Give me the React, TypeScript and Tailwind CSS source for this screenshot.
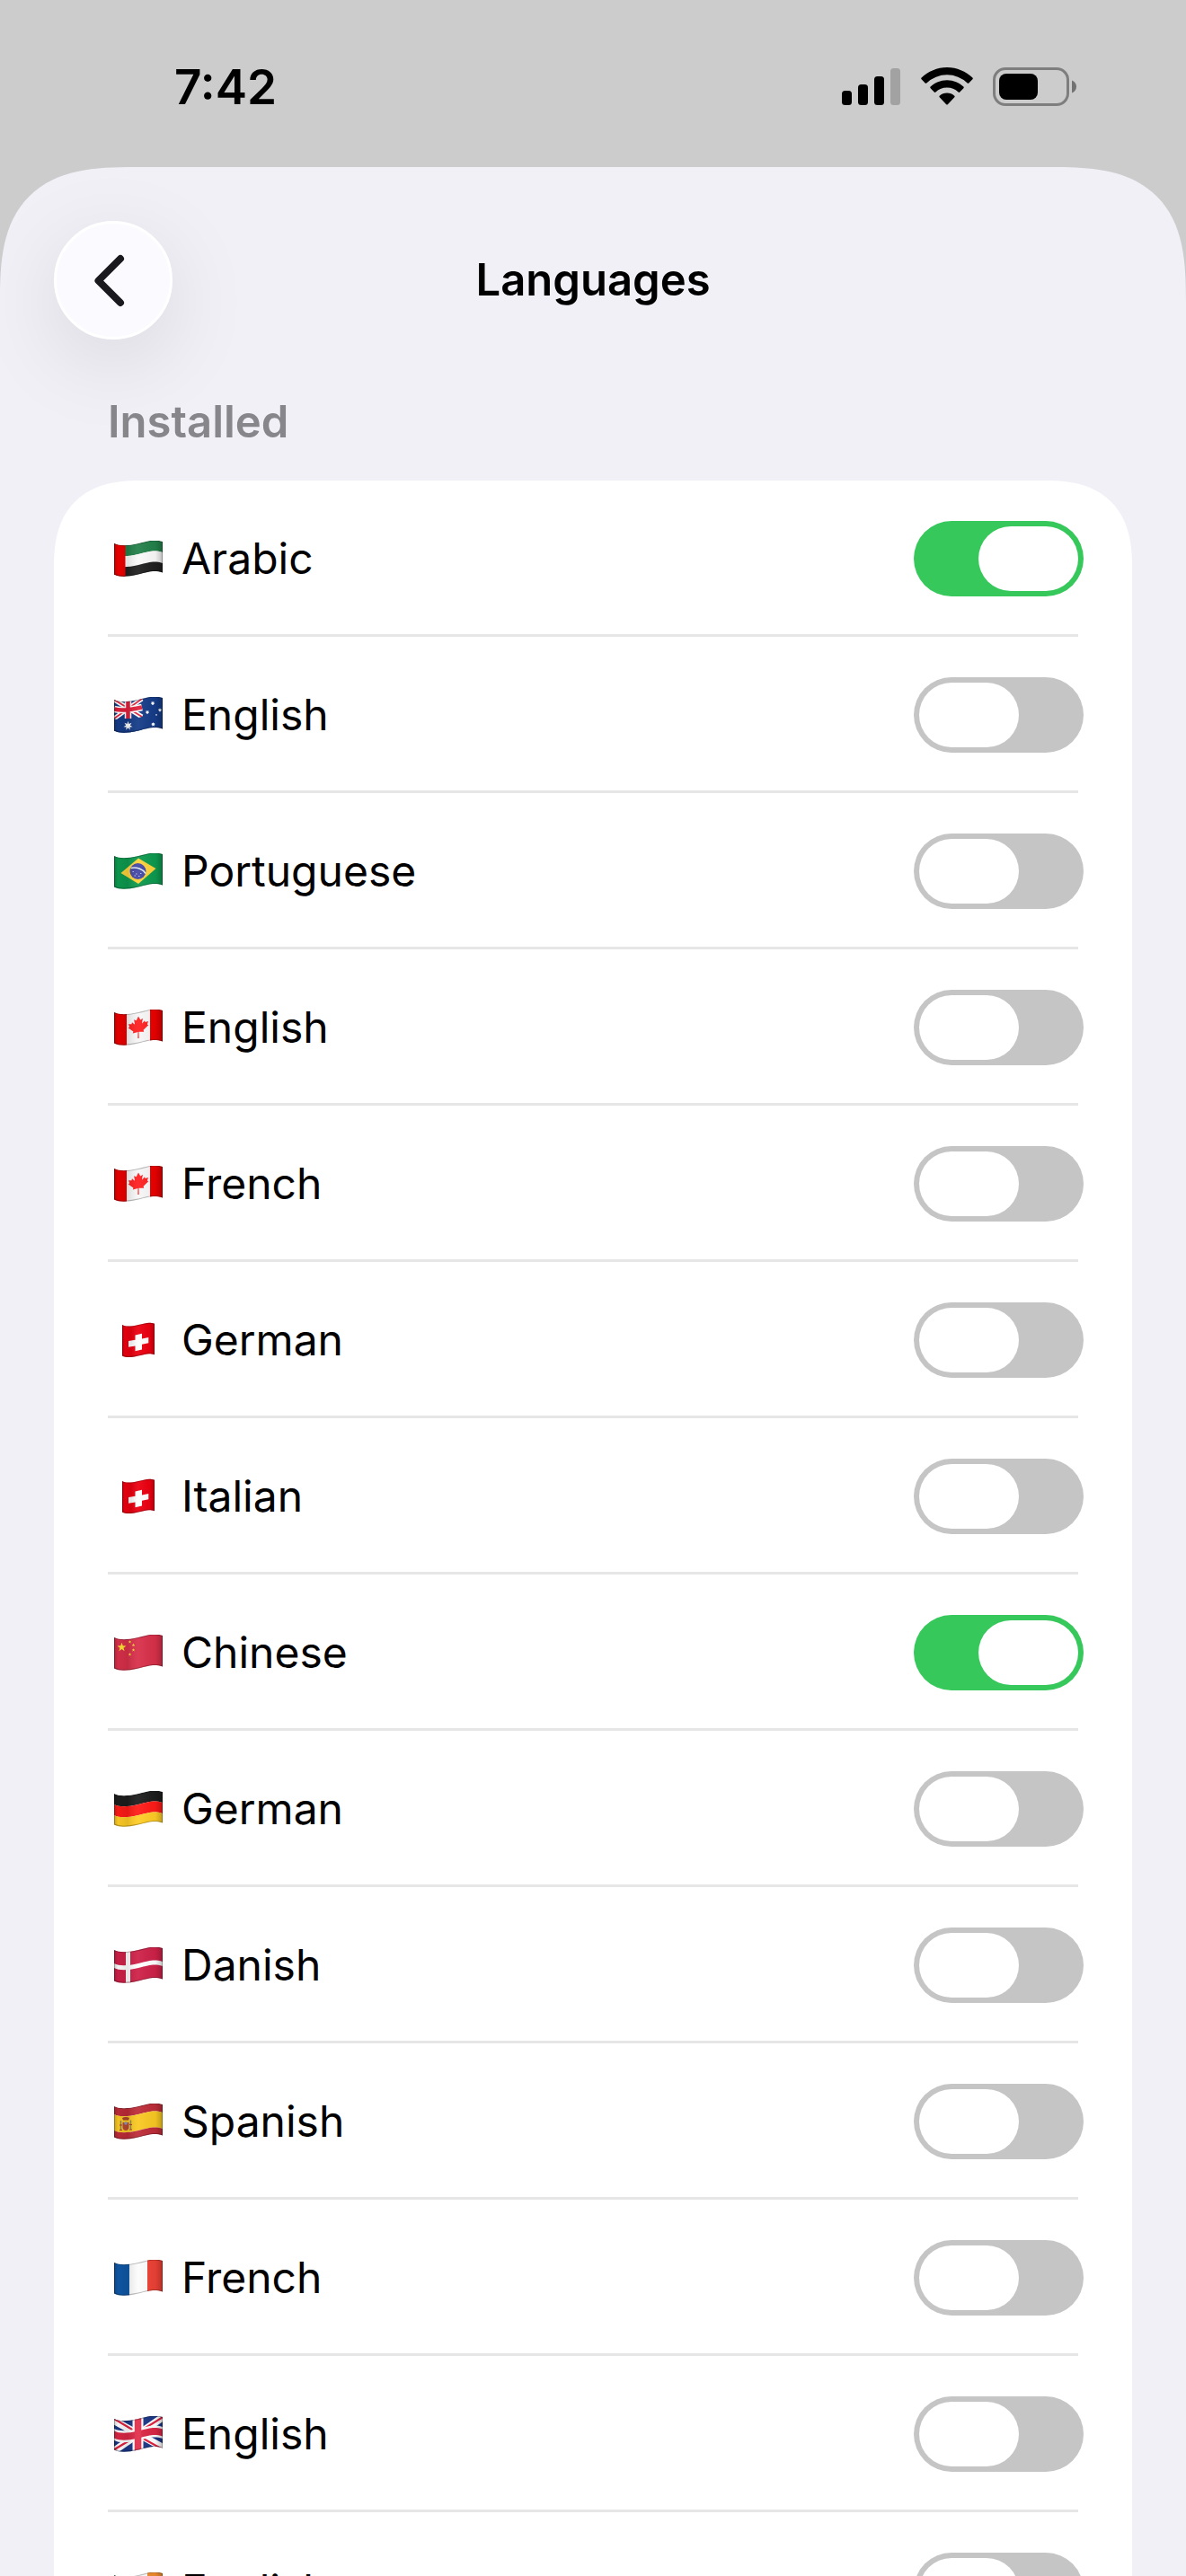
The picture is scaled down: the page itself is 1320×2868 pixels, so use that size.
import { useId, useState } from "react";
import type { ReactNode } from "react";

type Language = {
    id: string;
    name: string;
    country: string;
    enabled: boolean;
};

const initialLanguages: Language[] = [
    { id: "ar-AE", name: "Arabic", country: "AE", enabled: true },
    { id: "en-AU", name: "English", country: "AU", enabled: false },
    { id: "pt-BR", name: "Portuguese", country: "BR", enabled: false },
    { id: "en-CA", name: "English", country: "CA", enabled: false },
    { id: "fr-CA", name: "French", country: "CA", enabled: false },
    { id: "de-CH", name: "German", country: "CH", enabled: false },
    { id: "it-CH", name: "Italian", country: "CH", enabled: false },
    { id: "zh-CN", name: "Chinese", country: "CN", enabled: true },
    { id: "de-DE", name: "German", country: "DE", enabled: false },
    { id: "da-DK", name: "Danish", country: "DK", enabled: false },
    { id: "es-ES", name: "Spanish", country: "ES", enabled: false },
    { id: "fr-FR", name: "French", country: "FR", enabled: false },
    { id: "en-GB", name: "English", country: "GB", enabled: false },
    { id: "en-IE", name: "English", country: "IE", enabled: false },
];

// A horizontal strip of a waving flag, w wide, between heights y0 and y1
function wave(y0: number, y1: number, w = 54) {
    const k = w / 54;
    return `M0 ${y0}C${6 * k} ${y0 + 3 * k} ${14 * k} ${y0 + 3 * k} ${27 * k} ${y0}S${44 * k} ${y0 - 5 * k} ${w} ${y0 - 2 * k}V${y1 - 2 * k}C${44 * k} ${y1 - 5 * k} ${40 * k} ${y1 - 3 * k} ${27 * k} ${y1}S${6 * k} ${y1 + 3 * k} 0 ${y1}Z`;
}

function star(cx: number, cy: number, r: number, points = 5, inner = 0.4) {
    const coords: string[] = [];
    for (let i = 0; i < points * 2; i++) {
        const radius = i % 2 ? r * inner : r;
        const a = (Math.PI * i) / points - Math.PI / 2;
        coords.push(`${(cx + radius * Math.cos(a)).toFixed(2)} ${(cy + radius * Math.sin(a)).toFixed(2)}`);
    }
    return `M${coords.join("L")}Z`;
}

const MAPLE =
    "M0-13L2.3-8.6 4.9-10 3.9-4.2 7-7.2 7.6-5.4 11-5.9 9.9-2.6 11.2-1.6 5.6 3.1 6.2 5.2.5 4.4.7 11.5H-.7L-.5 4.4-6.2 5.2-5.6 3.1-11.2-1.6-9.9-2.6-11-5.9-7.6-5.4-7-7.2-3.9-4.2-4.9-10-2.3-8.6Z";

const flags: Record<string, ReactNode> = {
    AE: (
        <>
            <path d={wave(3, 15)} fill="#23814a" />
            <path d={wave(15, 27)} fill="#fafafa" />
            <path d={wave(27, 38)} fill="#202020" />
            <rect width="12.5" height="42" fill="#ee0000" />
        </>
    ),
    AU: (
        <>
            <rect width="54" height="42" fill="#153c88" />
            <path d="M0 3L31 22M0 24L31 2" stroke="#fff" strokeWidth="5" />
            <path d="M0 3L31 22M0 24L31 2" stroke="#e0203c" strokeWidth="1.6" />
            <path d="M15.5 2V24M0 13.5C8 15.5 20 14 31 11.5" stroke="#fff" strokeWidth="7.5" fill="none" />
            <path d="M15.5 2V24M0 13.5C8 15.5 20 14 31 11.5" stroke="#e0203c" strokeWidth="4.5" fill="none" />
            <path d="M0 24.5C10 27 20 25 31 22V42H0Z" fill="#153c88" />
            <path d={star(15.5, 32, 5.2, 7, 0.45)} fill="#fff" />
            <path d={star(43, 7, 2.4, 7, 0.55)} fill="#fff" />
            <path d={star(37, 17, 2.3, 7, 0.55)} fill="#fff" />
            <path d={star(51, 14.5, 2.2, 7, 0.55)} fill="#fff" />
            <path d={star(43.5, 30.5, 2.4, 7, 0.55)} fill="#fff" />
            <path d={star(47, 20, 1.3)} fill="#fff" />
        </>
    ),
    BR: (
        <>
            <rect width="54" height="42" fill="#0d9a4f" />
            <path d="M7.5 22L27 5.5 46.5 17 27 34Z" fill="#fdd23a" />
            <circle cx="26.5" cy="20" r="9" fill="#4347a5" />
            <path d="M18.5 16.5C25 15 32 17.5 35 22.5" stroke="#dfe9ef" strokeWidth="1.5" fill="none" />
            <path d="M20.5 20.5H22M24 23H25.5M27 25.5H28.5M22.5 25H24M29 22.5H30.5" stroke="#b9bbe0" />
        </>
    ),
    CA: (
        <>
            <rect width="54" height="42" fill="#f7f7f7" />
            <rect width="14" height="42" fill="#e90000" />
            <rect x="40" width="14" height="42" fill="#e90000" />
            <path transform="translate(27 20.5) skewY(-8)" d={MAPLE} fill="#ff2020" />
        </>
    ),
    CH: (
        <>
            <rect width="36" height="42" fill="#ec0010" />
            <path
                d="M14.5 14.5L22 12.8V18.6L29.3 17V23.2L22 24.8V30.6L14.5 32.3V26.4L7 27.8V21L14.5 19.8Z"
                fill="#fff"
            />
        </>
    ),
    CN: (
        <>
            <rect width="54" height="42" fill="#d9304a" />
            <path d={star(8.5, 14, 5.2)} fill="#ffe234" />
            <path d={star(17.5, 8, 1.9)} fill="#ffe234" />
            <path d={star(21.5, 11.5, 1.9)} fill="#ffe234" />
            <path d={star(21.5, 17, 1.9)} fill="#ffe234" />
            <path d={star(17.5, 22, 1.9)} fill="#ffe234" />
        </>
    ),
    DE: (
        <>
            <path d={wave(3, 15)} fill="#1d1d1d" />
            <path d={wave(15, 27)} fill="#ff1b17" />
            <path d={wave(27, 38)} fill="#ffcd26" />
        </>
    ),
    DK: (
        <>
            <rect width="54" height="42" fill="#ce2148" />
            <path d={wave(18, 23)} fill="#fff" />
            <rect x="13" width="5" height="42" fill="#fff" />
        </>
    ),
    ES: (
        <>
            <path d={wave(3, 12)} fill="#bd2c38" />
            <path d={wave(12, 30)} fill="#fac922" />
            <path d={wave(30, 38)} fill="#bd2c38" />
            <path d="M9.5 21H16.5V26.5C16.5 31 9.5 31 9.5 26.5Z" fill="#b64a35" />
            <path d="M10 18.5L9 16C11.5 14.5 14.5 14.5 17 16L16 18.5Z" fill="#a8452b" />
            <circle cx="13" cy="22" r="1.8" fill="#8f93b8" />
            <path d="M7.5 19V29.5M18.5 18.5V29" stroke="#8a8466" strokeWidth="1.4" />
            <path d="M6 24H9M17 23.5H20M6 29.5H9M17 29H20" stroke="#a63a2e" strokeWidth="1.2" />
        </>
    ),
    FR: (
        <>
            <rect width="54" height="42" fill="#fcfcfc" />
            <rect width="17" height="42" fill="#0f58a6" />
            <rect x="37" width="17" height="42" fill="#ed4135" />
        </>
    ),
    GB: (
        <>
            <rect width="54" height="42" fill="#1b3686" />
            <path d="M-2 4L56 36M-2 40L56 0" stroke="#fff" strokeWidth="8" />
            <path d="M-1 2.5L27 19M27 22L56 38M-1 38L27 21M27 18L56 0" stroke="#e01f3d" strokeWidth="2.2" />
            <path d={wave(14, 27)} fill="#fff" />
            <rect x="20.5" width="12" height="42" fill="#fff" />
            <path d={wave(16.5, 24.5)} fill="#da2745" />
            <rect x="22.8" width="7.5" height="42" fill="#e3304c" />
        </>
    ),
    IE: (
        <>
            <rect width="54" height="42" fill="#fcfcfc" />
            <rect width="17" height="42" fill="#1f9a5a" />
            <rect x="37" width="17" height="42" fill="#ee8b2c" />
        </>
    ),
};

function Flag({ country }: { country: string }) {
    const id = useId();
    const width = country === "CH" ? 36 : 54;
    return (
        <svg width={width} height="40" viewBox={`0 0 ${width} 40`} aria-hidden="true">
            <defs>
                <clipPath id={`${id}clip`}>
                    <path d={wave(3, 37.5, width)} />
                </clipPath>
                {/* light falling across the folds of the cloth */}
                <linearGradient id={`${id}fold`}>
                    <stop offset="0" stopColor="#000" stopOpacity="0.22" />
                    <stop offset="0.08" stopColor="#000" stopOpacity="0.04" />
                    <stop offset="0.28" stopColor="#000" stopOpacity="0.1" />
                    <stop offset="0.5" stopColor="#fff" stopOpacity="0.06" />
                    <stop offset="0.85" stopColor="#000" stopOpacity="0.04" />
                    <stop offset="1" stopColor="#000" stopOpacity="0.24" />
                </linearGradient>
            </defs>
            <g clipPath={`url(#${id}clip)`}>
                {flags[country]}
                <rect width={width} height="42" fill={`url(#${id}fold)`} />
                <path d={wave(3, 37.5, width)} fill="none" stroke="#000" strokeOpacity="0.25" strokeWidth="2" />
            </g>
        </svg>
    );
}

function StatusBar() {
    return (
        <div className="flex h-[186px] shrink-0 items-center justify-between pt-2 pr-[121px] pl-[194px]">
            <time className="text-[53px] leading-[60px] font-semibold">7:42</time>
            <div className="flex items-center gap-[22px]">
                {/* Signal */}
                <svg width="66" height="44" viewBox="0 0 66 44" aria-label="Signal">
                    <rect y="26" width="11" height="16" rx="3.5" />
                    <rect x="18" y="19" width="11" height="23" rx="3.5" />
                    <rect x="36" y="10" width="11" height="32" rx="3.5" />
                    <rect x="54" y="1" width="11" height="41" rx="3.5" fill="#a2a2a2" />
                </svg>
                {/* Wi-Fi */}
                <svg width="58" height="44" viewBox="0 0 58 44" aria-label="Wi-Fi">
                    <path d="M29 0C40 0 50 4.500 57.400 11.600Q58.200 12.400 57.400 13.200L53.300 17.400Q52.500 18.200 51.700 17.400A33 33 0 0 0 6.300 17.400Q5.500 18.200 4.700 17.400L.6 13.200Q-.2 12.400 .6 11.600C8 4.500 18 0 29 0Z" />
                    <path d="M29 14.200C36.300 14.200 42.600 17 47.400 21.600Q48.200 22.400 47.400 23.200L43.200 27.500Q42.400 28.300 41.600 27.500A18.500 18.500 0 0 0 16.400 27.500Q15.600 28.300 14.800 27.500L10.600 23.200Q9.800 22.400 10.600 21.600C15.400 17 21.700 14.200 29 14.200Z" />
                    <path d="M29 28.500C32.200 28.500 35.100 29.700 37.300 31.700Q38.100 32.500 37.300 33.300L29.800 41.200Q29 42 28.200 41.200L20.700 33.300Q19.900 32.500 20.700 31.700C22.900 29.700 25.800 28.500 29 28.500Z" />
                </svg>
                {/* Battery */}
                <svg width="94" height="44" viewBox="0 0 94 44" aria-label="Battery">
                    <rect x="1.5" y="1.5" width="82" height="40" rx="12.5" fill="none" stroke="#7e7e7e" strokeWidth="3" />
                    <rect x="7" y="7" width="43" height="29" rx="8" />
                    <path d="M88 14.5C91.5 16 93 18.5 93 21.5S91.5 27 88 28.5Z" fill="#727272" />
                </svg>
            </div>
        </div>
    );
}

function LanguageRow({ language, onToggle }: { language: Language; onToggle: () => void }) {
    return (
        <li className="mx-[60px] h-[174px] shadow-[inset_0_-3px_#e6e6e6]">
            <label className="-mr-[6px] flex h-full items-center gap-[14px]">
                <span className="flex w-[68px] justify-center">
                    <Flag country={language.country} />
                </span>
                <span className="flex-1 text-5xl leading-[60px]">{language.name}</span>
                <input
                    type="checkbox"
                    role="switch"
                    checked={language.enabled}
                    onChange={onToggle}
                    className="flex h-[84px] w-[189px] appearance-none rounded-full bg-[#c5c5c5] p-[6px] before:h-[72px] before:w-[111px] before:rounded-full before:bg-white checked:justify-end checked:bg-[#37c85b]"
                />
            </label>
        </li>
    );
}

export default function App() {
    const [languages, setLanguages] = useState(initialLanguages);

    const toggle = (id: string) =>
        setLanguages((prev) => prev.map((l) => (l.id === id ? { ...l, enabled: !l.enabled } : l)));

    return (
        <div className="flex h-screen flex-col overflow-hidden bg-[#cccccc] font-['Inter',sans-serif] text-black">
            <StatusBar />

            <main className="min-h-0 flex-1 overflow-y-auto rounded-t-[150px] bg-[#f1f0f6] px-[60px] [corner-shape:superellipse(1.5)] [scrollbar-width:none]">
                <header className="grid grid-cols-[132px_1fr_132px] items-center pt-[60px]">
                    <button
                        type="button"
                        aria-label="Back"
                        className="flex size-[132px] items-center justify-center rounded-full border-3 border-white bg-[#fbfaff] shadow-[0_24px_96px_rgba(0,0,0,0.1)]"
                    >
                        <svg width="44" height="60" viewBox="0 0 44 60" fill="none" aria-hidden="true">
                            <path
                                d="M30 6L5.5 30.5 30 55"
                                stroke="#1a191e"
                                strokeWidth="8"
                                strokeLinecap="round"
                                strokeLinejoin="round"
                            />
                        </svg>
                    </button>
                    <h1 className="text-center text-[49px] leading-[60px] font-semibold">Languages</h1>
                </header>

                <section>
                    <h2 className="mt-[62px] mb-[35px] px-[60px] text-[49px] leading-[60px] font-semibold text-[#86868b]">
                        Installed
                    </h2>
                    <ul className="rounded-t-[96px] bg-white [corner-shape:superellipse(1.3)]">
                        {languages.map((language) => (
                            <LanguageRow key={language.id} language={language} onToggle={() => toggle(language.id)} />
                        ))}
                    </ul>
                </section>
            </main>
        </div>
    );
}
